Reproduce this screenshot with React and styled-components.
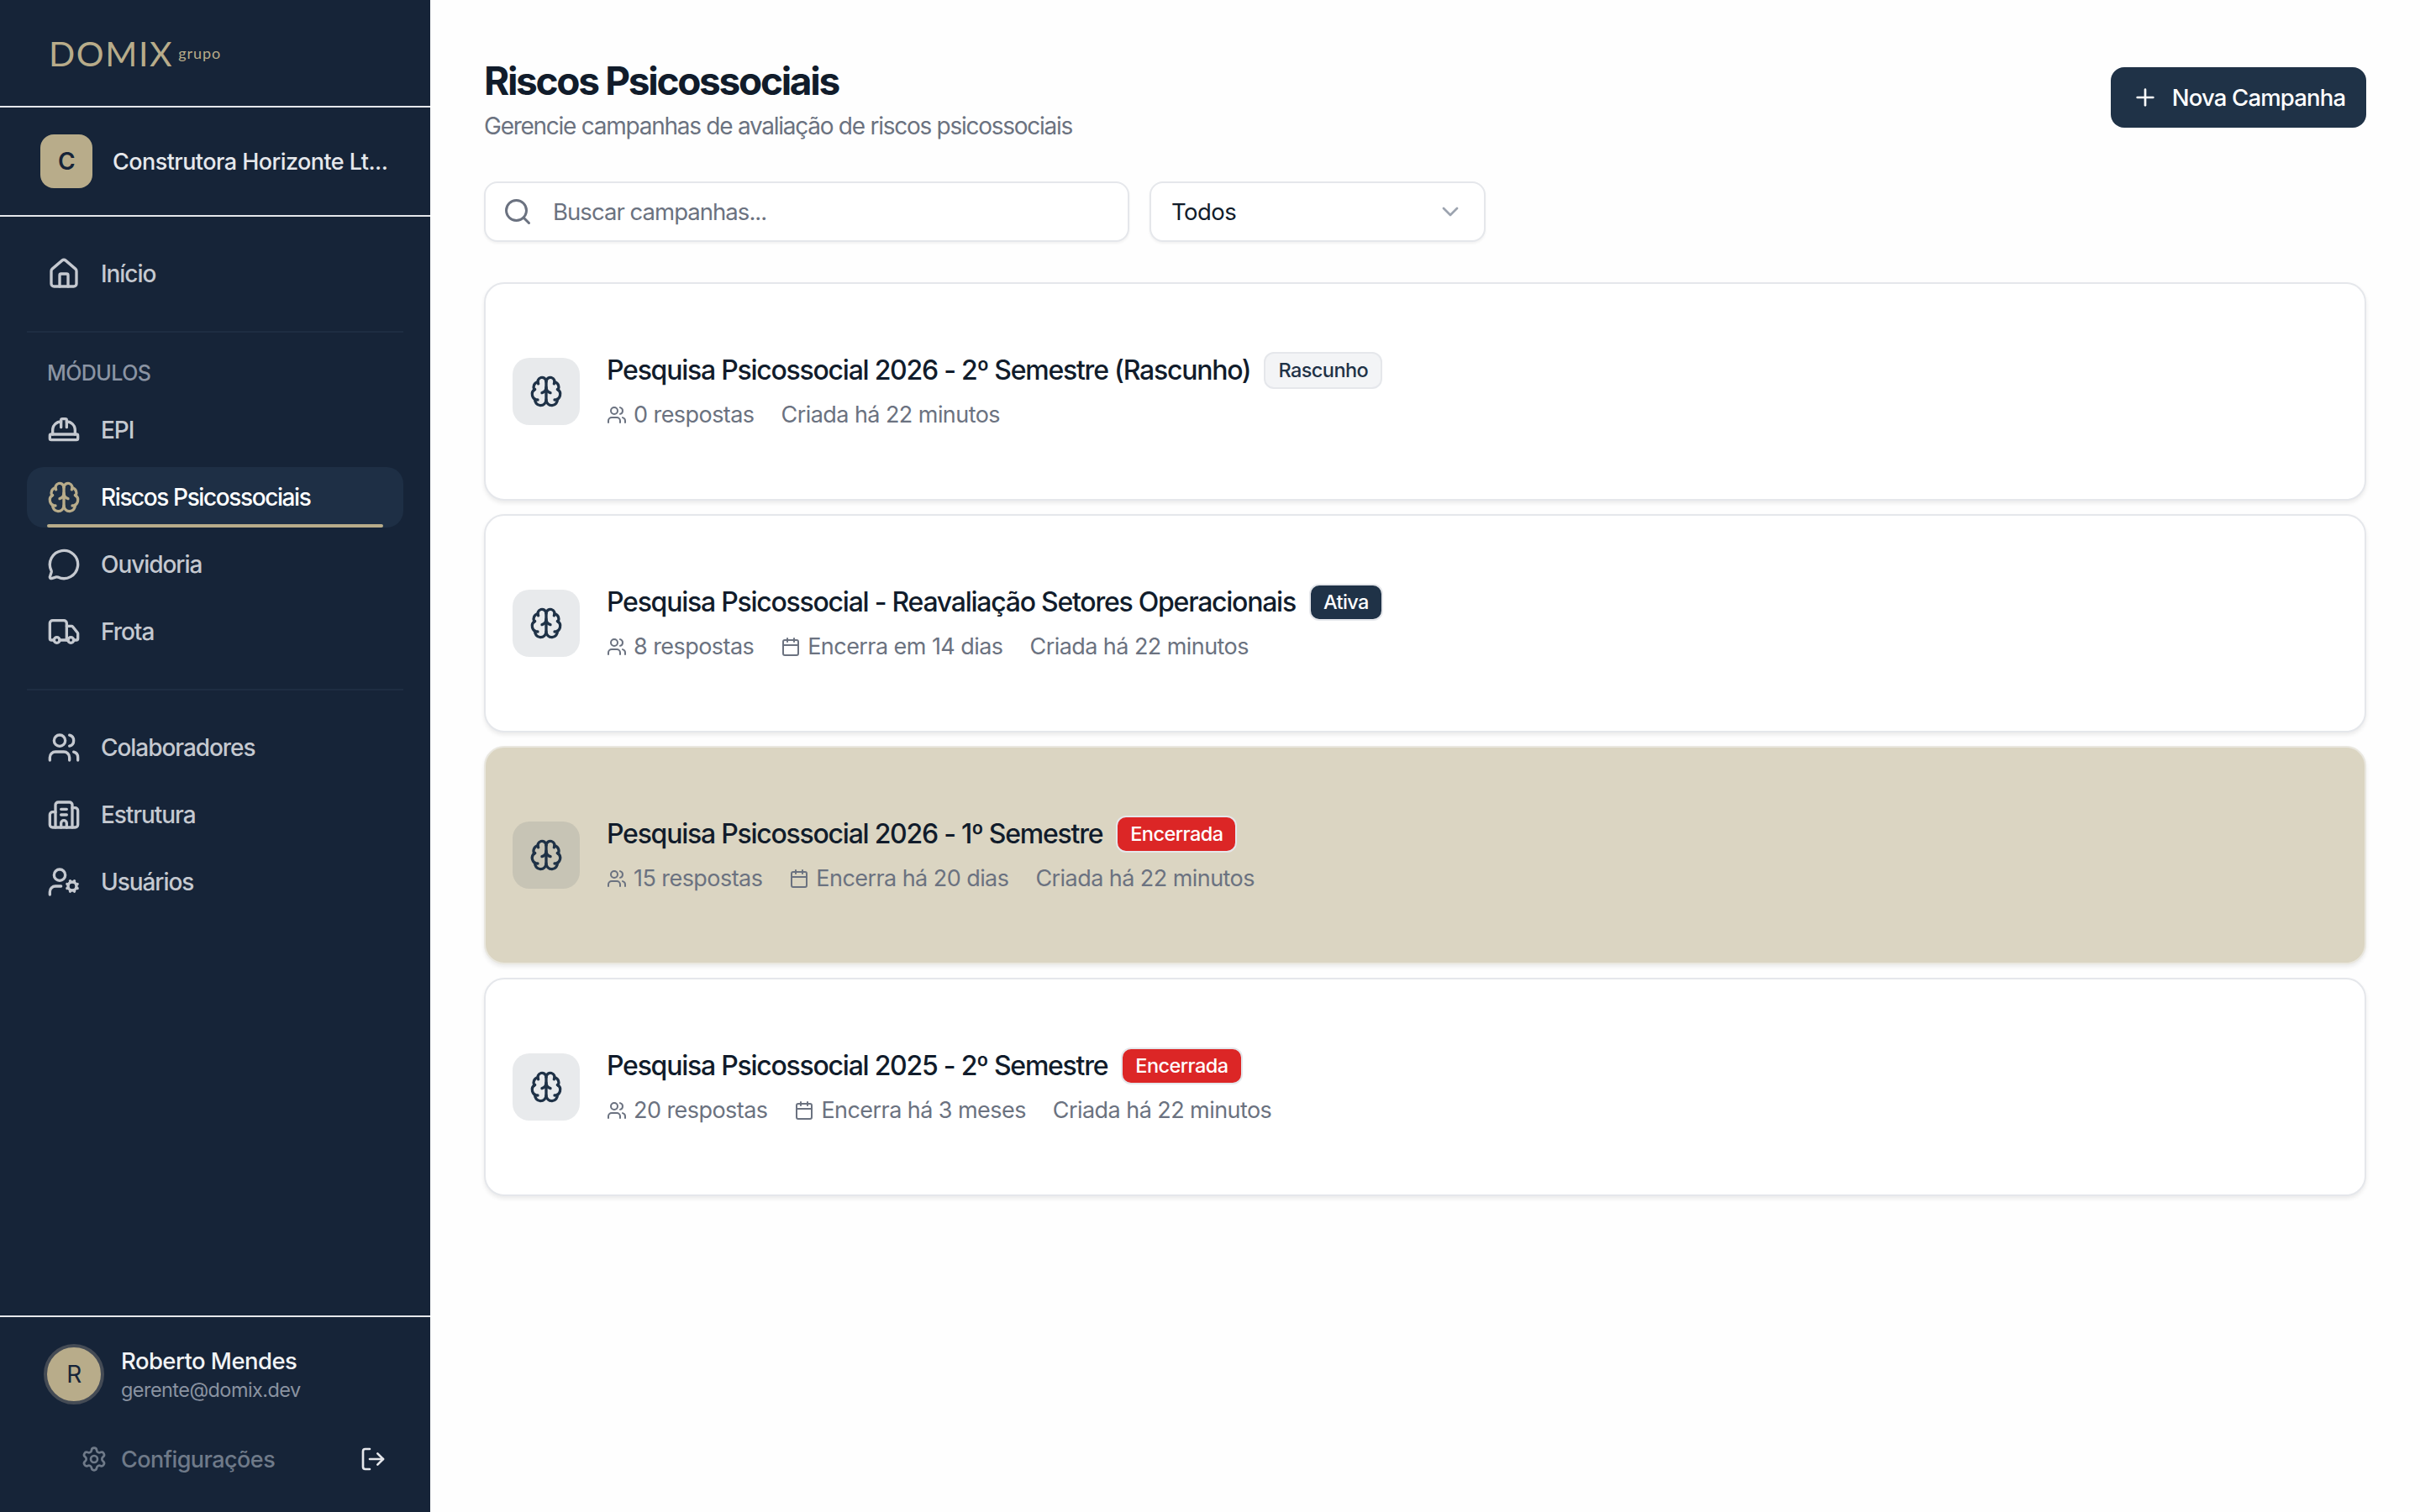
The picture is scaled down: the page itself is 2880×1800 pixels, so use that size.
import React from "react";
import styled, { createGlobalStyle } from "styled-components";
import {
  Brain,
  Building2,
  Calendar,
  ChevronDown,
  HardHat,
  House,
  LogOut,
  MessageCircle,
  Plus,
  Search,
  Settings,
  Truck,
  UserCog,
  Users,
} from "lucide-react";

const navy = "#162438";
const navyLight = "#1f3247";
const sand = "#b8ac8a";
const ink = "#111c2b";

const GlobalStyle = createGlobalStyle`
  * { box-sizing: border-box; }
  html, body { margin: 0; padding: 0; height: 100%; }
  body {
    font-family: "Inter", "Liberation Sans", sans-serif;
    letter-spacing: -0.035em;
    background: #fefefe;
    color: ${ink};
  }
  #root { height: 100%; }
`;

const Layout = styled.div`
  display: flex;
  height: 100vh;
`;

const Sidebar = styled.aside`
  width: 512px;
  flex-shrink: 0;
  display: flex;
  flex-direction: column;
  background: ${navy};
`;

const LogoBar = styled.div`
  height: 128px;
  padding: 0 58px 0;
  display: flex;
  align-items: center;
  gap: 6px;
  border-bottom: 2px solid #e5e7eb;
`;

const LogoMark = styled.span`
  font-family: "Lato", sans-serif;
  font-size: 41px;
  font-weight: 400;
  letter-spacing: 0.04em;
  color: ${sand};
`;

const LogoSub = styled.span`
  font-family: "Lato", sans-serif;
  font-size: 18px;
  letter-spacing: 0.05em;
  color: ${sand};
`;

const WorkspaceBar = styled.div`
  height: 130px;
  padding: 0 48px;
  display: flex;
  align-items: center;
  gap: 24px;
  border-bottom: 2px solid #e5e7eb;
`;

const WorkspaceAvatar = styled.div`
  width: 62px;
  height: 64px;
  flex-shrink: 0;
  display: flex;
  align-items: center;
  justify-content: center;
  border-radius: 16px;
  background: ${sand};
  color: ${navy};
  font-size: 28px;
  font-weight: 600;
`;

const WorkspaceName = styled.div`
  font-size: 27px;
  font-weight: 500;
  color: #e6e8ec;
  white-space: nowrap;
`;

const Nav = styled.nav`
  flex: 1;
  padding: 32px 32px 0;
`;

const NavList = styled.div`
  display: flex;
  flex-direction: column;
  gap: 8px;
`;

const NavItem = styled.div`
  position: relative;
  height: 72px;
  padding-left: 24px;
  display: flex;
  align-items: center;
  gap: 24px;
  border-radius: 20px;
  font-size: 28px;
  font-weight: 500;
  letter-spacing: ${(p) => (p.$active ? "-0.05em" : "-0.038em")};
  color: ${(p) => (p.$active ? "#ffffff" : "#c5c9d0")};
  background: ${(p) => (p.$active ? "#1e2f45" : "transparent")};

  svg {
    color: ${(p) => (p.$active ? sand : "#c5c9d0")};
  }

  &::after {
    content: "";
    display: ${(p) => (p.$active ? "block" : "none")};
    position: absolute;
    left: 24px;
    right: 24px;
    bottom: 0;
    height: 4px;
    border-radius: 2px;
    background: ${sand};
  }
`;

const NavDivider = styled.div`
  height: 2px;
  margin: 32px 0;
  background: #1e2d42;
`;

const NavLabel = styled.div`
  height: 32px;
  margin: 0 0 16px;
  padding-left: 24px;
  font-size: 25px;
  line-height: 32px;
  font-weight: 500;
  color: #8b94a3;
  text-transform: uppercase;
`;

const SidebarFooter = styled.div`
  height: 234px;
  padding: 32px 52px 0;
  border-top: 2px solid #e5e7eb;
`;

const UserRow = styled.div`
  display: flex;
  align-items: center;
  gap: 20px;
`;

const UserAvatar = styled.div`
  width: 72px;
  height: 72px;
  display: flex;
  align-items: center;
  justify-content: center;
  border-radius: 50%;
  border: 4px solid #444b55;
  background: ${sand};
  color: ${navy};
  font-size: 28px;
`;

const UserInfo = styled.div`
  padding-top: 2px;
`;

const UserName = styled.div`
  font-size: 27.5px;
  line-height: 36px;
  font-weight: 500;
  color: #f1f3f5;
`;

const UserEmail = styled.div`
  font-size: 23.5px;
  line-height: 34px;
  color: #8a93a1;
`;

const SettingsRow = styled.div`
  height: 64px;
  margin-top: 33px;
  padding-left: 44px;
  display: flex;
  align-items: center;
  gap: 16px;
  font-size: 27px;
  font-weight: 500;
  color: #6f7a89;
`;

const LogoutButton = styled.div`
  margin-left: auto;
  display: flex;
  color: #e5e7eb;
`;

const Main = styled.main`
  flex: 1;
  padding: 64px;
`;

const Header = styled.header`
  display: flex;
  justify-content: space-between;
  align-items: flex-start;
  margin-bottom: 46px;
`;

const PageTitle = styled.h1`
  margin: 0;
  font-size: 46px;
  line-height: 64px;
  font-weight: 700;
  letter-spacing: -0.05em;
  color: ${ink};
`;

const PageSubtitle = styled.p`
  margin: 2px 0 0;
  font-size: 28px;
  line-height: 40px;
  letter-spacing: -0.045em;
  color: #6b7280;
`;

const PrimaryButton = styled.button`
  height: 72px;
  width: 304px;
  margin-top: 16px;
  display: flex;
  align-items: center;
  justify-content: center;
  gap: 16px;
  border: 0;
  border-radius: 16px;
  background: ${navyLight};
  color: #ffffff;
  font: inherit;
  font-size: 27.5px;
  font-weight: 500;
  letter-spacing: -0.03em;
`;

const Filters = styled.div`
  display: flex;
  gap: 24px;
  margin-bottom: 48px;
`;

const SearchBox = styled.label`
  width: 768px;
  height: 72px;
  padding-left: 20px;
  display: flex;
  align-items: center;
  gap: 24px;
  border: 2px solid #e5e7eb;
  border-radius: 16px;
  background: #ffffff;
  box-shadow: 0 2px 3px rgba(0, 0, 0, 0.05);
  color: #6b7280;
`;

const SearchInput = styled.input`
  flex: 1;
  border: 0;
  outline: 0;
  padding: 0;
  background: transparent;
  font: inherit;
  font-size: 27.5px;
  letter-spacing: -0.035em;

  &::placeholder {
    color: #6b7280;
    opacity: 1;
  }
`;

const SelectBox = styled.div`
  width: 400px;
  height: 72px;
  padding: 0 24px;
  display: flex;
  align-items: center;
  justify-content: space-between;
  border: 2px solid #e5e7eb;
  border-radius: 16px;
  background: #ffffff;
  box-shadow: 0 2px 3px rgba(0, 0, 0, 0.05);
  font-size: 27.5px;
  color: ${ink};

  svg {
    color: #9ca3af;
  }
`;

const CampaignList = styled.div`
  display: flex;
  flex-direction: column;
  gap: 16px;
`;

const Card = styled.article`
  height: 260px;
  padding: 0 32px;
  display: flex;
  align-items: center;
  gap: 32px;
  border: 2px solid ${(p) => (p.$highlight ? "#e9e7df" : "#e5e7eb")};
  border-radius: 24px;
  background: ${(p) => (p.$highlight ? "#dbd5c2" : "#ffffff")};
  box-shadow: 0 3px 5px rgba(0, 0, 0, 0.08);
`;

const CardIcon = styled.div`
  width: 80px;
  height: 80px;
  flex-shrink: 0;
  display: flex;
  align-items: center;
  justify-content: center;
  border-radius: 20px;
  background: rgba(31, 50, 71, 0.1);
  color: ${navyLight};
`;

const CardBody = styled.div`
  display: flex;
  flex-direction: column;
  gap: 11px;
`;

const TitleRow = styled.div`
  display: flex;
  align-items: center;
  gap: 16px;
`;

const CardTitle = styled.h3`
  margin: 0;
  font-size: 32px;
  font-weight: 500;
  letter-spacing: -0.039em;
  color: ${ink};
`;

const badgeColors = {
  draft: { bg: "#f3f4f6", fg: navyLight },
  active: { bg: navyLight, fg: "#ffffff" },
  closed: { bg: "#dc2626", fg: "#ffffff" },
};

const Badge = styled.span`
  height: 44px;
  padding: 0 15px;
  display: flex;
  align-items: center;
  border: 2px solid #e5e7eb;
  border-radius: 12px;
  font-size: 23.5px;
  font-weight: 500;
  background: ${(p) => badgeColors[p.$kind].bg};
  color: ${(p) => badgeColors[p.$kind].fg};
`;

const MetaRow = styled.div`
  height: 40px;
  display: flex;
  align-items: center;
  gap: 32px;
  font-size: 27px;
  color: #6b7280;
`;

const MetaItem = styled.span`
  display: flex;
  align-items: center;
  gap: 8px;
`;

const campaigns = [
  {
    title: "Pesquisa Psicossocial 2026 - 2º Semestre (Rascunho)",
    badge: "Rascunho",
    kind: "draft",
    responses: "0 respostas",
  },
  {
    title: "Pesquisa Psicossocial - Reavaliação Setores Operacionais",
    badge: "Ativa",
    kind: "active",
    responses: "8 respostas",
    deadline: "Encerra em 14 dias",
  },
  {
    title: "Pesquisa Psicossocial 2026 - 1º Semestre",
    badge: "Encerrada",
    kind: "closed",
    responses: "15 respostas",
    deadline: "Encerra há 20 dias",
    highlight: true,
  },
  {
    title: "Pesquisa Psicossocial 2025 - 2º Semestre",
    badge: "Encerrada",
    kind: "closed",
    responses: "20 respostas",
    deadline: "Encerra há 3 meses",
  },
];

const App = () => (
  <Layout>
    <GlobalStyle />
    <Sidebar>
      <LogoBar>
        <LogoMark>DOMIX</LogoMark>
        <LogoSub>grupo</LogoSub>
      </LogoBar>
      <WorkspaceBar>
        <WorkspaceAvatar>C</WorkspaceAvatar>
        <WorkspaceName>Construtora Horizonte Lt...</WorkspaceName>
      </WorkspaceBar>
      <Nav>
        <NavItem>
          <House size={40} />
          Início
        </NavItem>
        <NavDivider />
        <NavLabel>Módulos</NavLabel>
        <NavList>
          <NavItem>
            <HardHat size={40} />
            EPI
          </NavItem>
          <NavItem $active>
            <Brain size={40} />
            Riscos Psicossociais
          </NavItem>
          <NavItem>
            <MessageCircle size={40} />
            Ouvidoria
          </NavItem>
          <NavItem>
            <Truck size={40} />
            Frota
          </NavItem>
        </NavList>
        <NavDivider />
        <NavList>
          <NavItem>
            <Users size={40} />
            Colaboradores
          </NavItem>
          <NavItem>
            <Building2 size={40} />
            Estrutura
          </NavItem>
          <NavItem>
            <UserCog size={40} />
            Usuários
          </NavItem>
        </NavList>
      </Nav>
      <SidebarFooter>
        <UserRow>
          <UserAvatar>R</UserAvatar>
          <UserInfo>
            <UserName>Roberto Mendes</UserName>
            <UserEmail>gerente@domix.dev</UserEmail>
          </UserInfo>
        </UserRow>
        <SettingsRow>
          <Settings size={32} />
          Configurações
          <LogoutButton>
            <LogOut size={32} />
          </LogoutButton>
        </SettingsRow>
      </SidebarFooter>
    </Sidebar>
    <Main>
      <Header>
        <div>
          <PageTitle>Riscos Psicossociais</PageTitle>
          <PageSubtitle>
            Gerencie campanhas de avaliação de riscos psicossociais
          </PageSubtitle>
        </div>
        <PrimaryButton>
          <Plus size={32} />
          Nova Campanha
        </PrimaryButton>
      </Header>
      <Filters>
        <SearchBox>
          <Search size={36} />
          <SearchInput placeholder="Buscar campanhas..." />
        </SearchBox>
        <SelectBox>
          Todos
          <ChevronDown size={32} />
        </SelectBox>
      </Filters>
      <CampaignList>
        {campaigns.map((c) => (
          <Card key={c.title} $highlight={c.highlight}>
            <CardIcon>
              <Brain size={40} />
            </CardIcon>
            <CardBody>
              <TitleRow>
                <CardTitle>{c.title}</CardTitle>
                <Badge $kind={c.kind}>{c.badge}</Badge>
              </TitleRow>
              <MetaRow>
                <MetaItem>
                  <Users size={24} />
                  {c.responses}
                </MetaItem>
                {c.deadline && (
                  <MetaItem>
                    <Calendar size={24} />
                    {c.deadline}
                  </MetaItem>
                )}
                <MetaItem>Criada há 22 minutos</MetaItem>
              </MetaRow>
            </CardBody>
          </Card>
        ))}
      </CampaignList>
    </Main>
  </Layout>
);

export default App;
